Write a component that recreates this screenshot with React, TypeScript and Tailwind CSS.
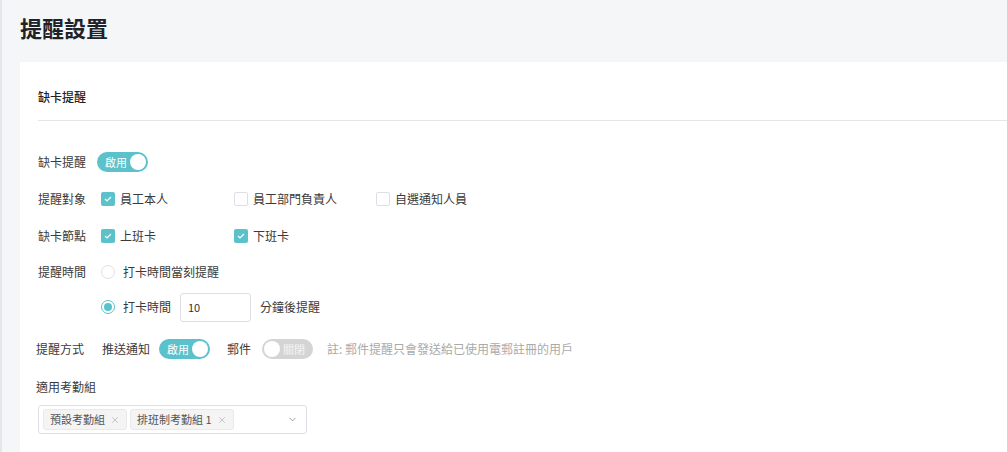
import { ChevronDown, X } from "lucide-react";

const font = { fontFamily: '"Noto Sans CJK TC", "Noto Sans", sans-serif' };

function Toggle({ on, text }: { on: boolean; text: string }) {
  if (on) {
    return (
      <div className="flex h-[20px] w-[51px] items-center justify-between rounded-full bg-[#5bc2cc] pl-[8px] pr-[2px]">
        <span className="text-[11px] leading-none text-white">{text}</span>
        <span className="h-[16px] w-[16px] rounded-full bg-white" />
      </div>
    );
  }
  return (
    <div className="flex h-[20px] w-[51px] items-center justify-between rounded-full bg-[#d4d4d4] pl-[2px] pr-[8px]">
      <span className="h-[16px] w-[16px] rounded-full bg-white" />
      <span className="text-[11px] leading-none text-[#f4f4f4]">{text}</span>
    </div>
  );
}

function Checkbox({ checked, label, width }: { checked: boolean; label: string; width: string }) {
  return (
    <div className={`flex items-center gap-[5px] ${width}`}>
      {checked ? (
        <span className="flex h-[14px] w-[14px] items-center justify-center rounded-[2px] bg-[#5bc2cc]">
          <svg width="8" height="6" viewBox="0 0 8 6" fill="none">
            <path d="M1 3l2 2 4-4" stroke="white" strokeWidth="1.2" />
          </svg>
        </span>
      ) : (
        <span className="h-[14px] w-[14px] rounded-[2px] border border-[#dcdfe6] bg-white" />
      )}
      <span className="text-[12px] text-[#3a3a3a]">{label}</span>
    </div>
  );
}

function Radio({ checked }: { checked: boolean }) {
  return checked ? (
    <span className="flex h-[14px] w-[14px] items-center justify-center rounded-full border border-[#5bc2cc] bg-white">
      <span className="h-[8px] w-[8px] rounded-full bg-[#5bc2cc]" />
    </span>
  ) : (
    <span className="h-[14px] w-[14px] rounded-full border border-[#dcdfe6] bg-white" />
  );
}

function Tag({ text }: { text: string }) {
  return (
    <div className="flex h-[21px] items-center gap-[5px] rounded-[3px] border border-[#e9e9eb] bg-[#f4f4f5] pl-[6px] pr-[6px]">
      <span className="text-[11px] text-[#555]">{text}</span>
      <X size={10} className="text-[#aaa]" strokeWidth={1.5} />
    </div>
  );
}

export default function App() {
  return (
    <div
      className="h-[452px] w-[1007px] overflow-hidden border-l-2 border-[#e4e6ea] bg-[#f5f6f8]"
      style={font}
    >
      <h1 className="pl-[18px] pt-[12px] text-[22px] font-bold leading-[30px] text-[#1f2329]">提醒設置</h1>
      <div className="ml-[18px] mt-[20px] h-[400px] bg-white pl-[18px] pt-[25px]">
        <div className="border-b border-[#e6e6e6] pb-[13px] text-[12px] font-medium leading-[20px] text-[#222]">
          缺卡提醒
        </div>

        <div className="mt-[30px] flex h-[22px] items-center">
          <span className="w-[59px] text-[12px] text-[#3a3a3a]">缺卡提醒</span>
          <Toggle on text="啟用" />
        </div>

        <div className="mt-[15px] flex h-[22px] items-center">
          <span className="w-[63px] text-[12px] text-[#3a3a3a]">提醒對象</span>
          <Checkbox checked label="員工本人" width="w-[133px]" />
          <Checkbox checked={false} label="員工部門負責人" width="w-[142px]" />
          <Checkbox checked={false} label="自選通知人員" width="" />
        </div>

        <div className="mt-[15px] flex h-[22px] items-center">
          <span className="w-[63px] text-[12px] text-[#3a3a3a]">缺卡節點</span>
          <Checkbox checked label="上班卡" width="w-[133px]" />
          <Checkbox checked label="下班卡" width="" />
        </div>

        <div className="mt-[14px] flex h-[22px] items-center">
          <span className="w-[63px] text-[12px] text-[#3a3a3a]">提醒時間</span>
          <div className="flex items-center gap-[8px]">
            <Radio checked={false} />
            <span className="text-[12px] text-[#3a3a3a]">打卡時間當刻提醒</span>
          </div>
        </div>

        <div className="mt-[9px] flex h-[30px] items-center pl-[63px]">
          <div className="flex items-center gap-[8px]">
            <Radio checked />
            <span className="text-[12px] text-[#3a3a3a]">打卡時間</span>
          </div>
          <div className="ml-[9px] flex h-[29px] w-[71px] items-center rounded-[3px] border border-[#dcdfe6] pl-[7px] text-[11px] text-[#333]">
            10
          </div>
          <span className="ml-[9px] text-[12px] text-[#3a3a3a]">分鐘後提醒</span>
        </div>

        <div className="-ml-[2px] mt-[16px] flex h-[22px] items-center">
          <span className="w-[66px] text-[12px] text-[#3a3a3a]">提醒方式</span>
          <span className="w-[57px] text-[12px] text-[#3a3a3a]">推送通知</span>
          <Toggle on text="啟用" />
          <span className="ml-[17px] w-[35px] text-[12px] text-[#3a3a3a]">郵件</span>
          <Toggle on={false} text="關閉" />
          <span className="ml-[14px] text-[12px] text-[#aaa]">註: 郵件提醒只會發送給已使用電郵註冊的用戶</span>
        </div>

        <div className="-ml-[2px] mt-[17px] text-[12px] leading-[20px] text-[#3a3a3a]">適用考勤組</div>

        <div className="mt-[8px] flex h-[29px] w-[269px] items-center rounded-[3px] border border-[#dcdfe6] pl-[4px] pr-[8px]">
          <div className="flex flex-1 items-center gap-[3px]">
            <Tag text="預設考勤組" />
            <Tag text="排班制考勤組 1" />
          </div>
          <ChevronDown size={11} className="text-[#999]" />
        </div>
      </div>
    </div>
  );
}
